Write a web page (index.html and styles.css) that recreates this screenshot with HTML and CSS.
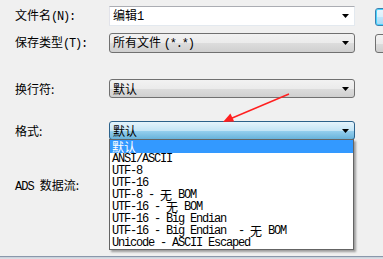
FILE: index.html
```html
<!DOCTYPE html>
<html lang="zh-CN">
<head>
<meta charset="utf-8">
<title>保存</title>
<link rel="stylesheet" href="styles.css">
</head>
<body>
<div class="page">
  <div class="form">
    <div class="row r1">
      <div class="label">文件名<span class="mono">(N):</span></div>
      <div class="textbox"><span class="val">编辑<span class="mono">1</span></span><svg class="arrow" width="7" height="4" viewBox="0 0 7 4"><path d="M0 0H7L3.5 4Z"/></svg></div>
      <div class="gap"></div>
      <div class="btn btn-default"></div>
    </div>
    <div class="row r2">
      <div class="label">保存类型<span class="mono">(T):</span></div>
      <div class="combo"><span class="val">所有文件 <span class="mono">(*.*)</span></span><svg class="arrow" width="7" height="4" viewBox="0 0 7 4"><path d="M0 0H7L3.5 4Z"/></svg></div>
      <div class="gap"></div>
      <div class="btn"></div>
    </div>
    <div class="row r3">
      <div class="label">换行符:</div>
      <div class="combo"><span class="val">默认</span><svg class="arrow" width="7" height="4" viewBox="0 0 7 4"><path d="M0 0H7L3.5 4Z"/></svg></div>
    </div>
    <div class="row r4">
      <div class="label">格式:</div>
      <div class="combo combo-open"><span class="val">默认</span><svg class="arrow" width="7" height="4" viewBox="0 0 7 4"><path d="M0 0H7L3.5 4Z"/></svg>
        <ul class="list">
          <li class="sel"><span class="cjk">默认</span></li>
          <li>ANSI/ASCII</li>
          <li>UTF-8</li>
          <li>UTF-16</li>
          <li><span>UTF-8 - </span><span class="cjk">无</span><span> BOM</span></li>
          <li><span>UTF-16 - </span><span class="cjk">无</span><span> BOM</span></li>
          <li>UTF-16 - Big Endian</li>
          <li><span>UTF-16 - Big Endian  - </span><span class="cjk">无</span><span> BOM</span></li>
          <li>Unicode - ASCII Escaped</li>
        </ul>
      </div>
    </div>
    <div class="row r5">
      <div class="label"><span class="mono ads">ADS </span>数据流:</div>
      <div class="combo hidden-ctl"></div>
    </div>
  </div>
  <div class="footer"></div>
  <svg class="annot" width="383" height="259" viewBox="0 0 383 259">
    <line x1="289" y1="94" x2="231" y2="118.5" stroke="#ff1f1f" stroke-width="1.4"/>
    <polygon points="223,122 234.2,121.6 230.4,113.6" fill="#ff1f1f"/>
  </svg>
</div>
</body>
</html>
```
FILE: styles.css
```css
html, body {
  margin: 0;
  padding: 0;
}
body {
  background: #f0f0f0;
  font-family: "Noto Sans CJK SC", "Liberation Sans", sans-serif;
  font-size: 12px;
  color: #000;
}
.page {
  position: relative;
  width: 383px;
  height: 259px;
  overflow: hidden;
}
.form {
  display: flex;
  flex-direction: column;
  padding-top: 6px;
}
.row {
  display: grid;
  grid-template-columns: 94px 246px 20px 40px;
  padding-left: 15px;
  align-items: center;
}
.r1 { height: 20px; }
.r2 { height: 20px; margin-top: 7px; }
.r3 { height: 19px; margin-top: 26px; }
.r4 { height: 19px; margin-top: 23px; }
.r5 { height: 19px; margin-top: 36px; }

.label {
  line-height: 14px;
  white-space: nowrap;
}
.mono {
  font-family: "Liberation Mono", monospace;
  font-size: 12px;
  letter-spacing: -1.2px;
}
.ads {
  white-space: pre;
  letter-spacing: -1px;
}

.textbox, .combo {
  box-sizing: border-box;
  height: 100%;
  display: flex;
  align-items: center;
  justify-content: space-between;
  padding: 0 4px 0 3px;
  line-height: 14px;
  position: relative;
}
.textbox {
  background: #fff;
  border: 1px solid #e3e9ef;
  border-top-color: #abadb3;
  border-left-color: #e2e3ea;
}
.combo {
  border: 1px solid #707070;
  border-radius: 3px;
  background: linear-gradient(#f2f2f2 0%, #ebebeb 50%, #dddddd 50%, #cfcfcf 100%);
}
.combo-open {
  border-color: #2c628b;
  background: linear-gradient(#e5f4fc 0%, #c4e5f6 50%, #98d1ef 50%, #68b3db 100%);
}
.hidden-ctl {
  visibility: hidden;
}
.val {
  white-space: pre;
}
.arrow {
  display: block;
  fill: #000;
  margin-right: 1px;
}

.btn {
  align-self: end;
  box-sizing: border-box;
  height: 19px;
  border: 1px solid #707070;
  border-radius: 3px;
  background: linear-gradient(#f2f2f2 0%, #ebebeb 50%, #dddddd 50%, #cfcfcf 100%);
}
.btn-default {
  height: 18px;
  border-color: #3c7fb1;
  box-shadow: inset 0 0 0 1px #48d5fd;
  background: linear-gradient(#eaf6fd 0%, #d9f0fc 50%, #bee6fd 50%, #a7d9f5 100%);
}

.list {
  position: absolute;
  top: 100%;
  left: -1px;
  width: 245px;
  box-sizing: border-box;
  margin: 0;
  padding: 0;
  list-style: none;
  background: #fff;
  border: 1px solid #646464;
  box-shadow: 2px 2px 2px rgba(0, 0, 0, 0.35);
  font-family: "Liberation Mono", monospace;
  font-size: 12px;
  letter-spacing: -1.2px;
  z-index: 2;
}
.list li {
  display: flex;
  align-items: center;
  height: 12px;
  padding-left: 2px;
  white-space: pre;
  color: #000;
}
.list li span {
  display: block;
  line-height: 12px;
  white-space: pre;
}
.list li.sel {
  height: 13px;
  background: #3399ff;
  color: #fff;
}
.list li .cjk {
  font-family: "Noto Sans CJK SC", sans-serif;
  font-size: 12px;
  line-height: 12px;
  letter-spacing: 0;
}

.footer {
  margin-top: 61px;
  height: 3px;
  border-top: 1px solid #8a98ab;
  background: linear-gradient(#c3ccd8, #f0f0f0);
}
.annot {
  position: absolute;
  left: 0;
  top: 0;
  pointer-events: none;
  z-index: 3;
}
```
